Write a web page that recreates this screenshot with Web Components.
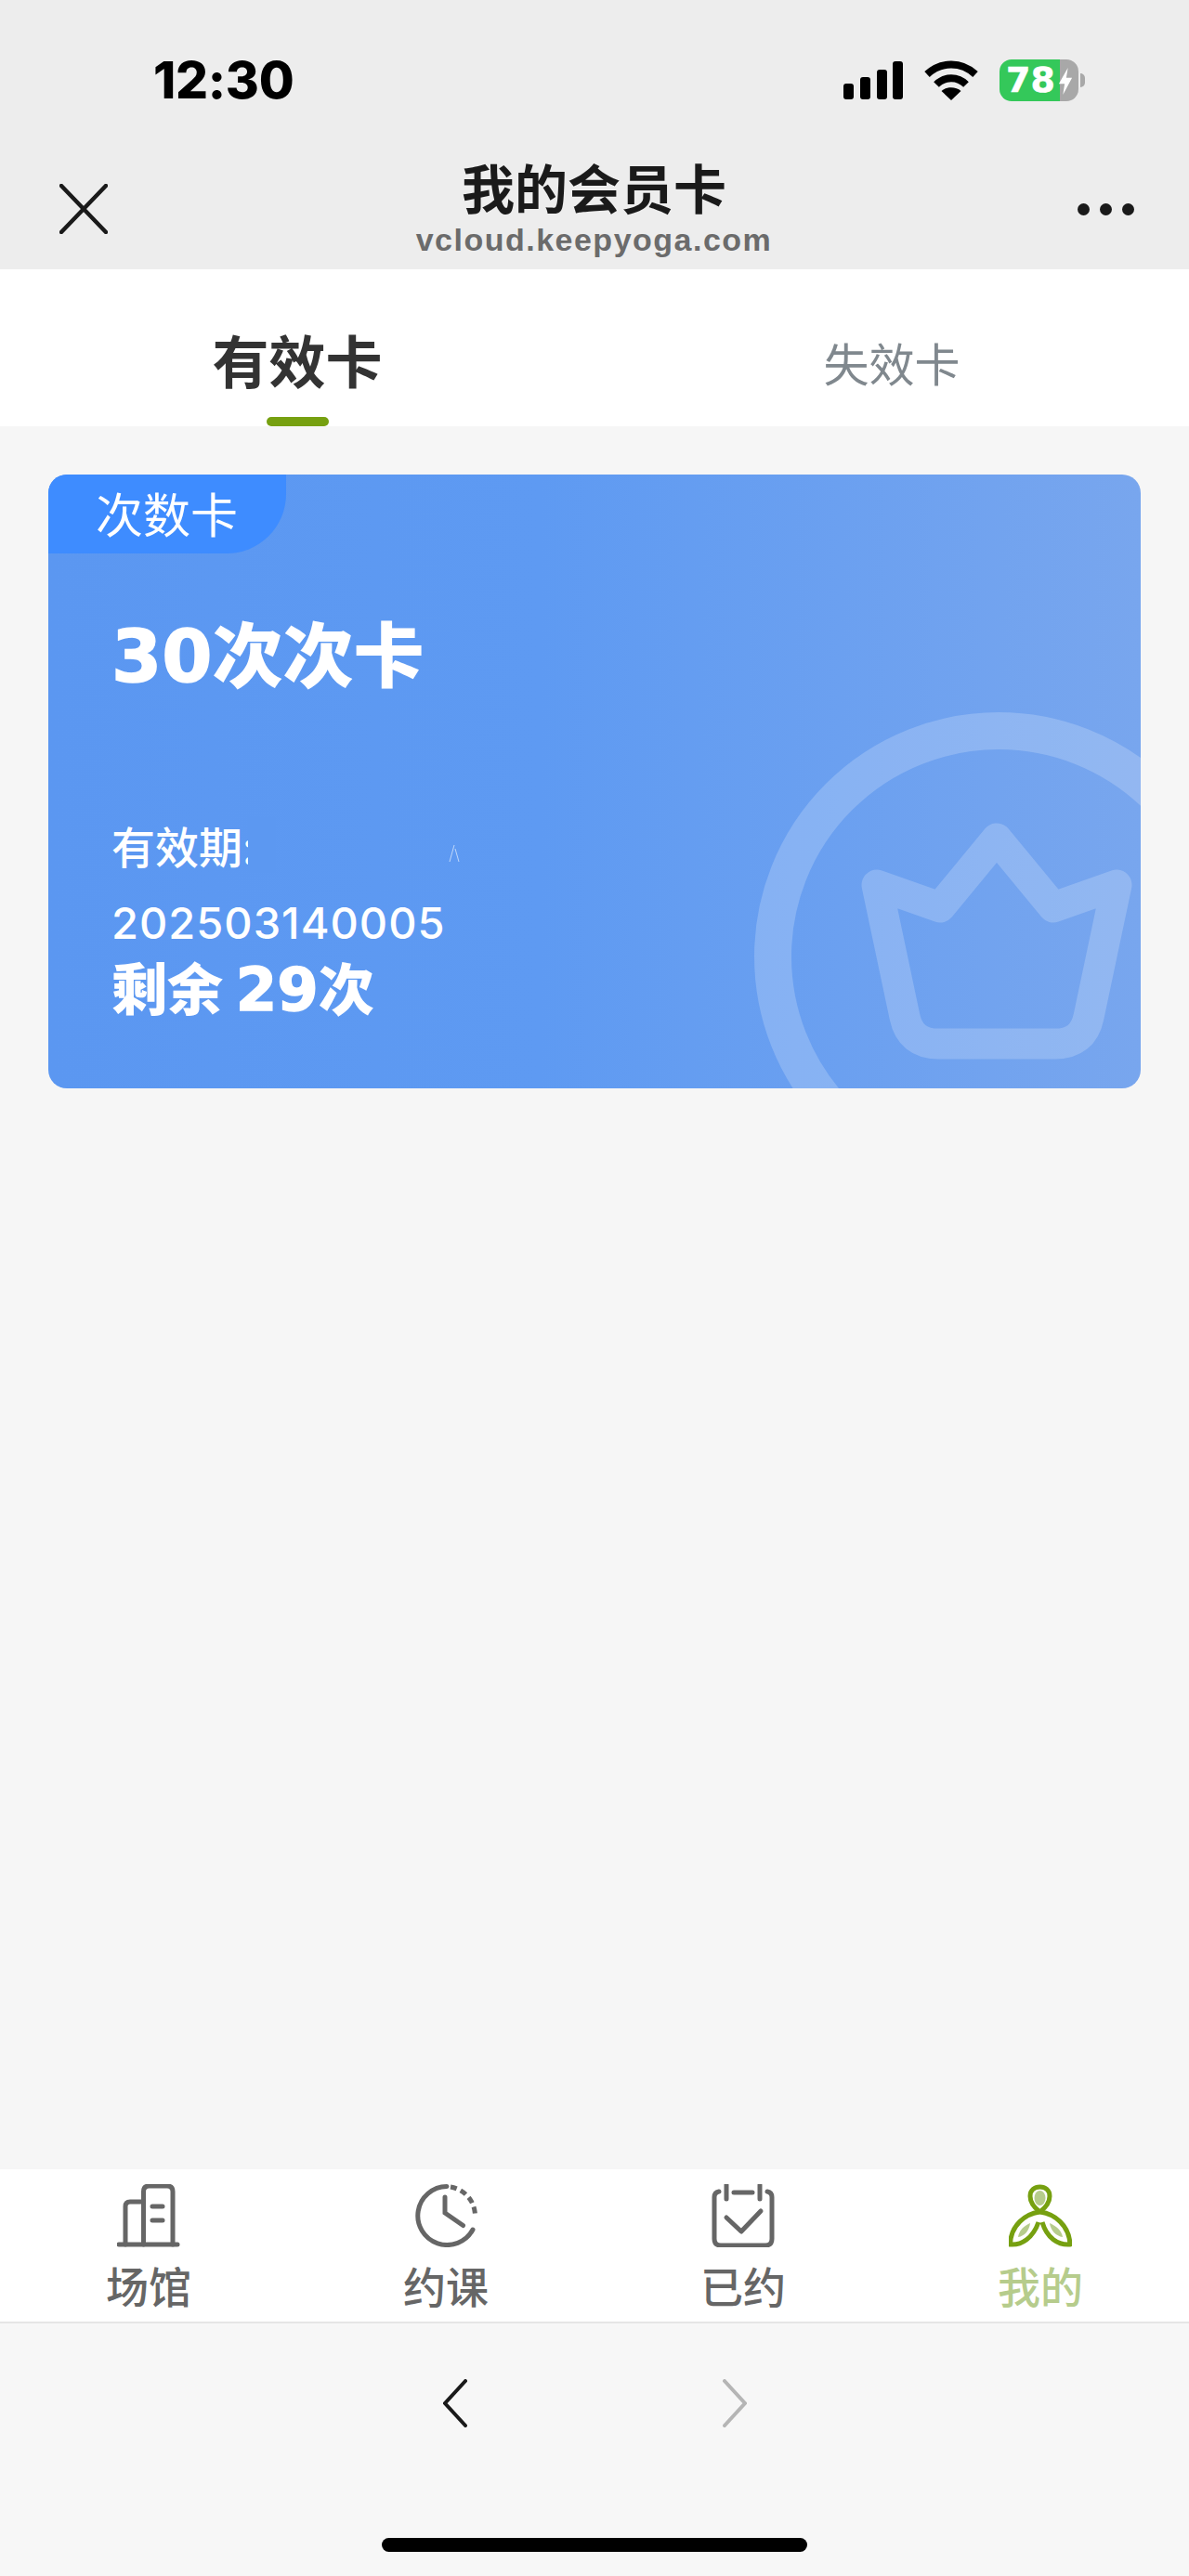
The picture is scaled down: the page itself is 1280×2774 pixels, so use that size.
<!DOCTYPE html>
<html lang="zh-CN">
<head>
<meta charset="utf-8">
<title>我的会员卡</title>
<style>
    html, body { margin: 0; height: 100%; }
    body {
        display: flex;
        flex-direction: column;
        height: 2774px;
        background-color: #f6f6f6;
        font-family: "Liberation Sans", "Noto Sans CJK SC", sans-serif;
    }
    card-list { flex: 1; }
</style>
</head>
<body>
<status-header title="我的会员卡" host="vcloud.keepyoga.com"></status-header>
<card-tabs>
    <card-tab active>有效卡</card-tab>
    <card-tab>失效卡</card-tab>
</card-tabs>
<card-list>
    <member-card kind="次数卡" remark="202503140005"></member-card>
</card-list>
<nav-bar>
    <nav-item icon="venue">场馆</nav-item>
    <nav-item icon="clock">约课</nav-item>
    <nav-item icon="booked">已约</nav-item>
    <nav-item icon="mine" active>我的</nav-item>
</nav-bar>
<browser-toolbar></browser-toolbar>

<script>
const CJK = `"Noto Sans CJK SC", sans-serif`;

window.customElements.define("status-header", class StatusHeader extends HTMLElement {
    constructor() {
        super();
        this.attachShadow({ mode: "open" });
    };

    connectedCallback() {
        this.shadowRoot.innerHTML = `
            <style>
                :host {
                    display: block;
                    height: 290px;
                    background-color: #ededed;
                    color: #000;
                }
                .status {
                    display: flex;
                    align-items: center;
                    justify-content: space-between;
                    height: 86px;
                    padding: 43px 112px 0 165px;
                }
                .time {
                    font: 800 55px/60px Inter, sans-serif;
                    letter-spacing: -0.3px;
                }
                .indicators {
                    display: flex;
                    align-items: center;
                    gap: 23px;
                }
                svg { display: block; }
                .battery {
                    display: flex;
                    align-items: center;
                    gap: 2px;
                }
                .cell {
                    position: relative;
                    width: 85px;
                    height: 45px;
                    border-radius: 13px;
                    overflow: hidden;
                    background: linear-gradient(90deg, #34c85a 0 65px, #a8a8a8 65px);
                    color: #fff;
                    font: 700 38px/45px "DejaVu Sans", sans-serif;
                    -webkit-text-stroke: 0.500px #fff;
                    text-indent: 7px;
                }
                .cell svg {
                    position: absolute;
                    top: 9px;
                    left: 63px;
                }
                .nub {
                    width: 5px;
                    height: 15px;
                    border-radius: 0 6px 6px 0;
                    background-color: #a8a8a8;
                }
                .nav {
                    display: grid;
                    grid-template-columns: 1fr auto 1fr;
                    align-items: center;
                    height: 118px;
                    margin-top: 37px;
                    padding: 0 59px 0 64px;
                }
                .center {
                    display: flex;
                    flex-direction: column;
                    align-items: center;
                    margin-right: 6px;
                }
                .title {
                    font: 700 57px/62px "Liberation Sans", ${CJK};
                    color: #1a1a1a;
                }
                .host {
                    margin-top: 3px;
                    font: 700 34px/38px "Liberation Sans", sans-serif;
                    letter-spacing: 1.500px;
                    color: #6b6b6b;
                }
                .more {
                    display: flex;
                    justify-content: flex-end;
                    gap: 11px;
                }
                .more i {
                    width: 13px;
                    height: 13px;
                    border-radius: 50%;
                    background-color: #1a1a1a;
                }
            </style>
            <div class="status">
                <span class="time">12:30</span>
                <div class="indicators">
                    <svg width="64" height="41" viewBox="0 0 64 41" fill="#000">
                        <rect x="0" y="24" width="11" height="17" rx="3"/>
                        <rect x="18" y="17" width="11" height="24" rx="3"/>
                        <rect x="36" y="9" width="11" height="32" rx="3"/>
                        <rect x="53" y="0" width="11" height="41" rx="3"/>
                    </svg>
                    <svg width="58" height="43" viewBox="0 0 58 43" fill="none" stroke="#000" stroke-width="8">
                        <path d="M3 15C18 1 40 1 55 15"/>
                        <path d="M13 26C22 17 36 17 45 26"/>
                        <path d="M29 43L18.500 33C24 28 34 28 39.500 33Z" fill="#000" stroke="none"/>
                    </svg>
                    <div class="battery">
                        <div class="cell">78<svg width="16" height="29" viewBox="0 0 18 27" preserveAspectRatio="none" fill="#fff"><path d="M12 0L1 16H8L6 27L17 10H10Z"/></svg></div>
                        <div class="nub"></div>
                    </div>
                </div>
            </div>
            <div class="nav">
                <svg width="52" height="54" viewBox="0 0 52 54" fill="none" stroke="#1a1a1a" stroke-width="4.500" stroke-linecap="round">
                    <path d="M2 2L50 52M50 2L2 52"/>
                </svg>
                <div class="center">
                    <span class="title">${this.getAttribute("title")}</span>
                    <span class="host">${this.getAttribute("host")}</span>
                </div>
                <div class="more"><i></i><i></i><i></i></div>
            </div>
        `;
    };
});

window.customElements.define("card-tabs", class CardTabs extends HTMLElement {
    constructor() {
        super();
        this.attachShadow({ mode: "open" });
        this.shadowRoot.innerHTML = `
            <style>
                :host {
                    display: grid;
                    grid-template-columns: 1fr 1fr;
                    height: 169px;
                    background-color: #fff;
                }
            </style>
            <slot></slot>
        `;
    };
});

window.customElements.define("card-tab", class CardTab extends HTMLElement {
    constructor() {
        super();
        this.attachShadow({ mode: "open" });
        this.shadowRoot.innerHTML = `
            <style>
                :host {
                    display: flex;
                    flex-direction: column;
                    align-items: center;
                    justify-content: flex-end;
                    font: 400 49px/60px "Liberation Sans", ${CJK};
                    color: #80888e;
                }
                :host([active]) {
                    font-size: 61px;
                    font-weight: 700;
                    color: #333;
                }
                .label { margin-bottom: 25px; }
                :host([active]) .label { margin-bottom: 27px; }
                .bar {
                    width: 67px;
                    height: 10px;
                    border-radius: 5px;
                }
                :host([active]) .bar { background-color: #76a010; }
            </style>
            <span class="label"><slot></slot></span>
            <span class="bar"></span>
        `;
    };
});

window.customElements.define("card-list", class CardList extends HTMLElement {
    constructor() {
        super();
        this.attachShadow({ mode: "open" });
        this.shadowRoot.innerHTML = `
            <style>
                :host {
                    display: block;
                    padding: 52px 52px 0;
                    background-color: #f6f6f6;
                }
            </style>
            <slot></slot>
        `;
    };
});

window.customElements.define("member-card", class MemberCard extends HTMLElement {
    constructor() {
        super();
        this.attachShadow({ mode: "open" });
    };

    connectedCallback() {
        this.shadowRoot.innerHTML = `
            <style>
                :host {
                    display: block;
                    position: relative;
                    height: 661px;
                    overflow: hidden;
                    border-radius: 20px;
                    background: linear-gradient(90deg, #5b97f1 0%, #5e9af2 45%, #78a6ee 100%);
                    color: #fff;
                    font-family: ${CJK};
                }
                .mark {
                    position: absolute;
                    top: 0;
                    left: 0;
                }
                .kind {
                    position: relative;
                    width: 256px;
                    height: 85px;
                    box-sizing: border-box;
                    padding-left: 51px;
                    border-bottom-right-radius: 64px;
                    background-color: #3e8cff;
                    font-size: 51px;
                    line-height: 83px;
                }
                .body {
                    position: relative;
                    padding-left: 68px;
                }
                .num {
                    font-family: "DejaVu Sans", sans-serif;
                    font-weight: 700;
                    -webkit-text-stroke: 1.500px #fff;
                }
                .name {
                    margin-top: 55px;
                    font-size: 76px;
                    font-weight: 900;
                    line-height: 100px;
                }
                .name .num { font-size: 78px; }
                .valid {
                    position: relative;
                    margin-top: 123px;
                    font-size: 47px;
                    font-weight: 500;
                    line-height: 60px;
                    white-space: nowrap;
                }
                /* the reference has the rest of this line painted out */
                .valid::after {
                    content: "";
                    position: absolute;
                    top: 0;
                    left: 147px;
                    width: 30px;
                    height: 100%;
                    background-color: #5c98f1;
                }
                .speck {
                    position: absolute;
                    top: 245px;
                    left: 430px;
                }
                .remark {
                    margin-top: 29px;
                    font: 500 47px/50px Inter, sans-serif;
                    letter-spacing: 1px;
                }
                .left {
                    margin-top: 8px;
                    font-size: 60px;
                    font-weight: 900;
                    line-height: 70px;
                }
                .left .num { font-size: 64px; }
            </style>
            <svg class="mark" width="1176" height="661" viewBox="52 511 1176 661" fill="none" stroke="#fff" stroke-opacity="0.2">
                <circle cx="1075" cy="1030" r="243" stroke-width="40"/>
                <path stroke-width="33" stroke-linejoin="round" d="M944 953L1012 977L1073 903L1134 977L1202 953L1172 1095Q1166 1124 1136 1124L1010 1124Q980 1124 974 1095Z"/>
            </svg>
            <div class="kind">${this.getAttribute("kind")}</div>
            <div class="body">
                <div class="name"><span class="num">30</span>次次卡</div>
                <div class="valid">有效期:</div>
                <svg class="speck" width="14" height="34" viewBox="0 0 14 34" fill="none" stroke="#fff" stroke-opacity="0.6">
                    <path d="M7 14L2 32M8 18L12 32"/>
                </svg>
                <div class="remark">${this.getAttribute("remark")}</div>
                <div class="left">剩余 <span class="num">29</span>次</div>
            </div>
        `;
    };
});

window.customElements.define("nav-bar", class NavBar extends HTMLElement {
    constructor() {
        super();
        this.attachShadow({ mode: "open" });
        this.shadowRoot.innerHTML = `
            <style>
                :host {
                    display: grid;
                    grid-template-columns: repeat(4, 1fr);
                    height: 164px;
                    border-bottom: 2px solid #e6e6e6;
                    background-color: #fff;
                }
            </style>
            <slot></slot>
        `;
    };
});

const NAV_ICONS = {
    venue: `
        <g fill="none" stroke="#666" stroke-width="5" stroke-linecap="round" stroke-linejoin="round">
            <path d="M2 65H65"/>
            <path d="M28.500 65V8Q28.500 2 34.500 2H54Q60 2 60 8V65"/>
            <path d="M28.500 19H14Q9 19 9 24V65"/>
            <path d="M38 24H49M38 39H49"/>
        </g>`,
    clock: `
        <g fill="none" stroke="#666" stroke-width="5" stroke-linecap="round">
            <path d="M35 2.500A31.500 31.500 0 1 0 63 49"/>
            <path d="M33 14V31L52.500 44.500"/>
            <path d="M39 3A31.500 31.500 0 0 1 65.500 35" stroke-linecap="butt" stroke-dasharray="7 4.500"/>
        </g>`,
    booked: `
        <g fill="none" stroke="#666" stroke-width="5" stroke-linecap="round" stroke-linejoin="round">
            <path d="M8 8Q3 9 3 14V59Q3 66 10 66H58Q65 66 65 59V14Q65 9 60 8"/>
            <path d="M16 1V16M52 1V16M24 9H44"/>
            <path d="M16 36L32 51L53 29"/>
        </g>`,
    mine: `
        <g fill="none" stroke="#76a010" stroke-width="5" stroke-linejoin="round">
            <path d="M33.500 30C27 25 23 20 23 13C23 6 28 3 33.500 3C39 3 44 6 44 13C44 20 40 25 33.500 30Z"/>
            <path d="M33 30C18 32 2 44 1.500 65C14 66 26 58 32 41"/>
            <path d="M34 30C49 32 65 44 66 65C53 66 41 58 36 41"/>
        </g>
        <g fill="#b6cc8c">
            <ellipse cx="33.500" cy="15" rx="6" ry="8"/>
            <path d="M23 42C16 45 11 50 10 57C17 56 22 50 23 42Z"/>
            <path d="M44 42C51 45 57 50 58 57C51 56 45 50 44 42Z"/>
        </g>`,
};

window.customElements.define("nav-item", class NavItem extends HTMLElement {
    constructor() {
        super();
        this.attachShadow({ mode: "open" });
    };

    connectedCallback() {
        this.shadowRoot.innerHTML = `
            <style>
                :host {
                    display: flex;
                    flex-direction: column;
                    align-items: center;
                    padding-top: 16px;
                    color: #666;
                    font: 500 46px/60px "Liberation Sans", ${CJK};
                }
                :host([active]) { color: #b6cc8c; }
                svg { display: block; }
                span { margin-top: 14px; }
            </style>
            <svg width="68" height="68" viewBox="0 0 68 68">${NAV_ICONS[this.getAttribute("icon")]}</svg>
            <span><slot></slot></span>
        `;
    };
});

window.customElements.define("browser-toolbar", class BrowserToolbar extends HTMLElement {
    constructor() {
        super();
        this.attachShadow({ mode: "open" });
        this.shadowRoot.innerHTML = `
            <style>
                :host {
                    display: flex;
                    flex-direction: column;
                    align-items: center;
                    height: 272px;
                    padding-top: 60px;
                    box-sizing: border-box;
                    background-color: #f7f7f7;
                }
                .arrows {
                    display: flex;
                    gap: 275px;
                }
                svg { display: block; }
                .home {
                    width: 458px;
                    height: 15px;
                    margin-top: 119px;
                    border-radius: 8px;
                    background-color: #000;
                }
            </style>
            <div class="arrows">
                <svg width="26" height="52" viewBox="0 0 26 52" fill="none" stroke="#1a1a1a" stroke-width="4" stroke-linecap="round">
                    <path d="M24 2L2 26L24 50"/>
                </svg>
                <svg width="26" height="52" viewBox="0 0 26 52" fill="none" stroke="#b5b5b5" stroke-width="4" stroke-linecap="round">
                    <path d="M2 2L24 26L2 50"/>
                </svg>
            </div>
            <div class="home"></div>
        `;
    };
});
</script>
</body>
</html>
